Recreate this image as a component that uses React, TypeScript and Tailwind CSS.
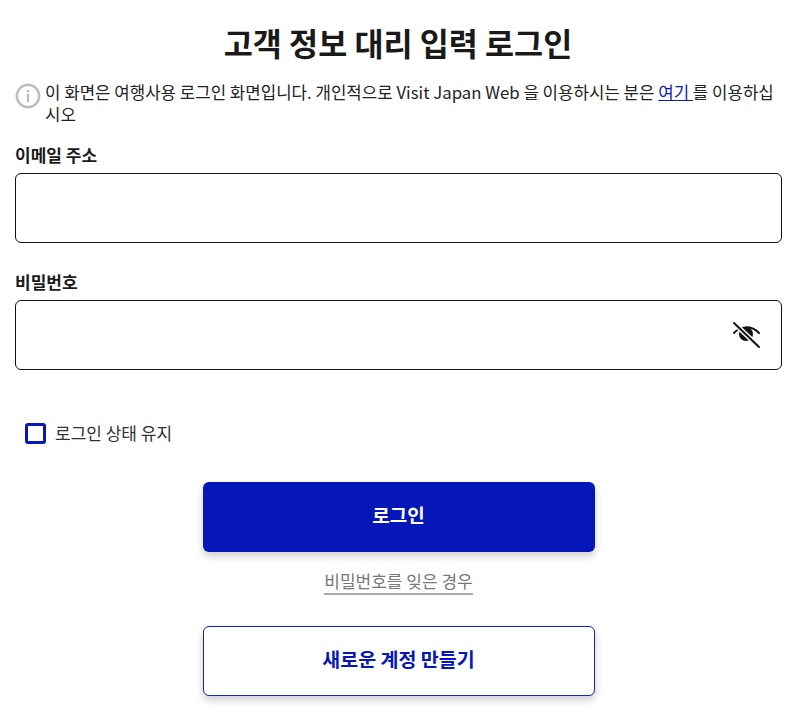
export default function App() {
  return (
    <div className="w-[800px] h-[728px] bg-white overflow-hidden px-[15px] text-[#1a1a1a] font-['Noto_Sans_CJK_KR','Noto_Sans',sans-serif]">
      <h1 className="pt-[21px] text-center text-[31.6px] leading-[42px] font-bold pr-[4px]">
        고객 정보 대리 입력 로그인
      </h1>

      <div className="mt-[18px] flex items-start gap-[4px] w-[767px]">
        <svg width="26" height="26" viewBox="0 0 26 26" className="shrink-0 mt-[2px]">
          <circle cx="13" cy="13" r="11.2" fill="none" stroke="#bdbdbd" strokeWidth="2.4" />
          <circle cx="13" cy="8" r="1.5" fill="#bdbdbd" />
          <rect x="11.8" y="11" width="2.4" height="8" fill="#bdbdbd" />
        </svg>
        <p className="text-[16.8px] leading-[22px] text-[#222]">
          이 화면은 여행사용 로그인 화면입니다. 개인적으로 Visit Japan Web 을 이용하시는 분은{" "}
          <a className="text-[#0a18b8] underline">여기 </a> 를 이용하십시오
        </p>
      </div>

      <label className="mt-[18px] block text-[17px] leading-[24px] font-bold">이메일 주소</label>
      <div className="mt-[6px] h-[70px] w-[767px] rounded-[6px] border border-[#111] bg-white" />

      <label className="mt-[27px] block text-[17px] leading-[24px] font-bold">비밀번호</label>
      <div className="mt-[6px] h-[70px] w-[767px] rounded-[6px] border border-[#111] bg-white flex items-center justify-end pr-[20px]">
        <svg width="30" height="28" viewBox="0 0 30 28">
          <path d="M3 12 C9 5 20 4 28 12" fill="none" stroke="#111" strokeWidth="2" strokeLinecap="round" />
          <circle cx="15" cy="13" r="7" fill="#111" />
          <path d="M3 2 L28 26" stroke="#fff" strokeWidth="5" />
          <path d="M3 2 L28 26" stroke="#111" strokeWidth="2" strokeLinecap="round" />
        </svg>
      </div>

      <div className="mt-[51px] ml-[10px] flex items-center gap-[9px]">
        <span className="size-[21px] rounded-[3px] border-[3px] border-[#0a18b8] bg-white" />
        <span className="text-[17px] leading-[24px] text-[#333]">로그인 상태 유지</span>
      </div>

      <div className="mt-[37px] flex flex-col items-center pr-[3px]">
        <button className="h-[70px] w-[392px] rounded-[6px] bg-[#0517b8] pb-[4px] text-white text-[19px] font-bold shadow-[0_4px_8px_rgba(0,0,0,0.2)]">
          로그인
        </button>
        <a className="mt-[17px] border-b-2 border-[#aaa] text-[17px] leading-[24px] text-[#777]">
          비밀번호를 잊은 경우
        </a>
        <button className="mt-[31px] h-[70px] w-[392px] rounded-[6px] border border-[#1626b8] bg-white pb-[5px] text-[#0517b8] text-[19.5px] font-bold shadow-[0_4px_8px_rgba(0,0,0,0.2)]">
          새로운 계정 만들기
        </button>
      </div>
    </div>
  );
}
